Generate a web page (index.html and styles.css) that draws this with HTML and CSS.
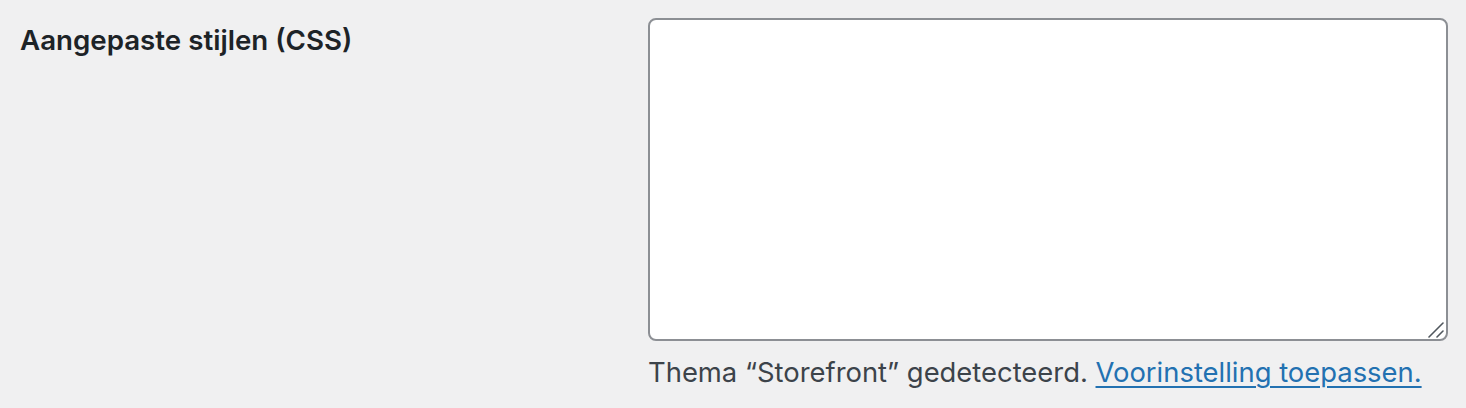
FILE: index.html
```html
<!DOCTYPE html>
<html lang="nl">
<head>
<meta charset="utf-8">
<title>Aangepaste stijlen</title>
<link rel="stylesheet" href="styles.css">
</head>
<body>
<div class="form-row">
  <div class="label-col">
    <label class="field-label" for="custom-css">Aangepaste stijlen (CSS)</label>
  </div>
  <div class="field-col">
    <div class="textarea-wrap">
      <textarea id="custom-css" class="css-input"></textarea>
      <svg class="grip" width="16" height="16" viewBox="0 0 16 16" aria-hidden="true">
        <line x1="1" y1="15" x2="15" y2="1" stroke="#50575e" stroke-width="1.6" stroke-linecap="round"/>
        <line x1="9" y1="15" x2="15" y2="9" stroke="#50575e" stroke-width="1.6" stroke-linecap="round"/>
      </svg>
    </div>
    <p class="description">Thema “Storefront” gedetecteerd. <a href="#" class="link">Voorinstelling toepassen.</a></p>
  </div>
</div>
</body>
</html>
```
FILE: styles.css
```css
html, body {
  margin: 0;
  padding: 0;
  background: #f0f0f1;
  font-family: Inter, "Noto Sans", "Liberation Sans", sans-serif;
  color: #1d2327;
}
.form-row {
  display: flex;
  padding: 18px 0 0 20px;
}
.label-col {
  width: 628px;
  flex: none;
  padding-top: 5px;
}
.field-label {
  font-size: 27.7px;
  font-weight: 600;
  line-height: 34px;
  color: #1d2327;
}
.field-col {
  width: 800px;
  flex: none;
}
.textarea-wrap {
  position: relative;
  width: 800px;
  height: 323px;
}
.css-input {
  display: block;
  box-sizing: border-box;
  width: 800px;
  height: 323px;
  margin: 0;
  border: 2px solid #8c8f94;
  border-radius: 8px;
  background: #fff;
  resize: none;
  outline: none;
}
.grip {
  position: absolute;
  right: 4px;
  bottom: 3px;
}
.description {
  margin: 11px 0 0 0;
  font-size: 27.4px;
  line-height: 40px;
  color: #3c434a;
}
.link {
  color: #2271b1;
  text-decoration: underline;
  text-underline-offset: 4px;
  text-decoration-thickness: 2px;
}
```
